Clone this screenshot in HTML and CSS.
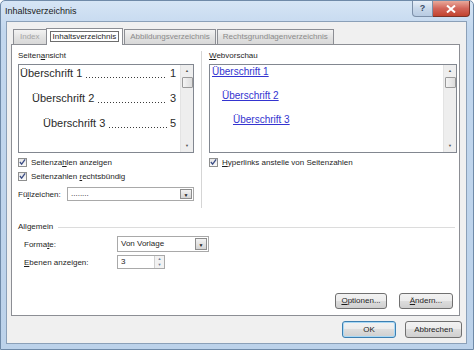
FILE: index.html
```html
<!DOCTYPE html>
<html lang="de">
<head>
    <meta charset="UTF-8">
    <title>Inhaltsverzeichnis</title>
    <link rel="stylesheet" href="styles.css">
</head>
<body>

    <div class="fenster">
        <!-- Titelleiste -->
        <div class="titelleiste">
            <span class="titel">Inhaltsverzeichnis</span>
            <div class="titel-knoepfe">
                <div class="knopf-hilfe">?</div>
                <div class="knopf-schliessen">
                    <svg width="10" height="8" viewBox="0 0 10 8"><path d="M1 0.5 L9 7.5 M9 0.5 L1 7.5" stroke="#fff" stroke-width="2"/></svg>
                </div>
            </div>
        </div>

        <div class="client">
            <!-- Reiter -->
            <div class="reiter-leiste">
                <div class="reiter blass">Index</div>
                <div class="reiter aktiv"><span class="fokus">Inhaltsverzeichnis</span></div>
                <div class="reiter">Abbildungsverzeichnis</div>
                <div class="reiter">Rechtsgrundlagenverzeichnis</div>
            </div>

            <div class="panel">
                <div class="oben">
                    <div class="spalte links">
                        <div class="label">Seiten<u>a</u>nsicht</div>
                        <div class="liste">
                            <div class="liste-inhalt druck">
                                <div class="eintrag e1"><span>Überschrift 1</span><span class="punkte"></span><span>1</span></div>
                                <div class="eintrag e2"><span>Überschrift 2</span><span class="punkte"></span><span>3</span></div>
                                <div class="eintrag e3"><span>Überschrift 3</span><span class="punkte"></span><span>5</span></div>
                            </div>
                            <div class="scrollbar">
                                <span class="pfeil">&#9650;</span>
                                <span class="daumen"></span>
                                <span class="leer"></span>
                                <span class="pfeil">&#9660;</span>
                            </div>
                        </div>
                        <div class="check erste"><span class="kasten"><svg width="8" height="8" viewBox="0 0 8 8"><path d="M1 4 L3 6.5 L7 1" fill="none" stroke="#3c4e86" stroke-width="1.5"/></svg></span><span>Seitenza<u>h</u>len anzeigen</span></div>
                        <div class="check"><span class="kasten"><svg width="8" height="8" viewBox="0 0 8 8"><path d="M1 4 L3 6.5 L7 1" fill="none" stroke="#3c4e86" stroke-width="1.5"/></svg></span><span>Seitenzahlen <u>r</u>echtsbündig</span></div>
                        <div class="zeile-fuell">
                            <span class="fuell-label">Fü<u>l</u>lzeichen:</span>
                            <div class="auswahl breit">
                                <span class="wert">........</span>
                                <span class="dropknopf">&#9660;</span>
                            </div>
                        </div>
                    </div>

                    <div class="trenner"></div>

                    <div class="spalte rechts">
                        <div class="label"><u>W</u>ebvorschau</div>
                        <div class="liste">
                            <div class="liste-inhalt web">
                                <a class="link l1">Überschrift 1</a>
                                <a class="link l2">Überschrift 2</a>
                                <a class="link l3">Überschrift 3</a>
                            </div>
                            <div class="scrollbar">
                                <span class="pfeil">&#9650;</span>
                                <span class="daumen"></span>
                                <span class="leer"></span>
                                <span class="pfeil">&#9660;</span>
                            </div>
                        </div>
                        <div class="check erste"><span class="kasten"><svg width="8" height="8" viewBox="0 0 8 8"><path d="M1 4 L3 6.5 L7 1" fill="none" stroke="#3c4e86" stroke-width="1.5"/></svg></span><span><u>H</u>yperlinks anstelle von Seitenzahlen</span></div>
                    </div>
                </div>

                <!-- Gruppe Allgemein -->
                <div class="gruppe">
                    <div class="gruppe-titel"><span>Allgemein</span><span class="linie"></span></div>
                    <div class="zeile">
                        <span class="zeile-label">Forma<u>t</u>e:</span>
                        <div class="auswahl formate">
                            <span class="wert">Von Vorlage</span>
                            <span class="dropknopf">&#9660;</span>
                        </div>
                    </div>
                    <div class="zeile">
                        <span class="zeile-label"><u>E</u>benen anzeigen:</span>
                        <div class="spin">
                            <span class="wert">3</span>
                            <span class="spin-knoepfe"><span>&#9650;</span><span>&#9660;</span></span>
                        </div>
                    </div>
                </div>

                <div class="panel-knoepfe">
                    <div class="knopf opt"><u>O</u>ptionen...</div>
                    <div class="knopf aend"><u>Ä</u>ndern...</div>
                </div>
            </div>

            <div class="fuss">
                <div class="knopf ok">OK</div>
                <div class="knopf abbr">Abbrechen</div>
            </div>
        </div>
    </div>

</body>
</html>
```

FILE: styles.css
```css
/* --- Grundeinstellungen --- */
* {
    margin: 0;
    padding: 0;
    box-sizing: border-box;
}

body {
    width: 474px;
    height: 350px;
    overflow: hidden;
    font-family: 'Liberation Sans', Arial, sans-serif;
    font-size: 8px;
    color: #1e1e1e;
    background: #ffffff;
}

u {
    text-decoration: underline;
}

/* --- Fensterrahmen --- */
.fenster {
    width: 474px;
    height: 350px;
    background: linear-gradient(to bottom, #d6e5f5 0px, #c2d7ee 30px, #bcd2ea 100%);
    border: 1px solid #6f8aa8;
    border-radius: 5px 5px 0 0;
    display: flex;
    flex-direction: column;
}

.titelleiste {
    height: 20px;
    display: flex;
    justify-content: space-between;
    align-items: flex-start;
    padding-left: 4px;
}

.titel {
    font-size: 9px;
    line-height: 20px;
    color: #1b1b1b;
}

.titel-knoepfe {
    display: flex;
    margin-right: 3px;
}

.knopf-hilfe {
    width: 21px;
    height: 16px;
    border: 1px solid #7c8fa8;
    border-top: none;
    border-radius: 0 0 0 4px;
    background: linear-gradient(to bottom, #e8eff8, #c9d8ea 50%, #b8cbe2);
    color: #3b4d66;
    font-size: 9px;
    font-weight: bold;
    text-align: center;
    line-height: 15px;
}

.knopf-schliessen {
    width: 37px;
    height: 16px;
    border: 1px solid #7a3328;
    border-left: none;
    border-top: none;
    border-radius: 0 0 4px 0;
    background: linear-gradient(to bottom, #e9a99a, #d2655a 50%, #c2432f);
    display: flex;
    justify-content: center;
    align-items: center;
}

/* --- Clientbereich --- */
.client {
    flex: 1;
    margin: 0 6px 6px 5px;
    background: #f0f0f0;
    border: 1px solid #8ba0b8;
    padding: 6px 4px 5px 4px;
    display: flex;
    flex-direction: column;
}

.reiter-leiste {
    display: flex;
    align-items: flex-end;
    padding-left: 2px;
    height: 16px;
    position: relative;
    z-index: 1;
}

.reiter {
    height: 15px;
    padding: 0 5px;
    margin-right: 1px;
    border: 1px solid #8c8e94;
    border-bottom: none;
    background: linear-gradient(to bottom, #f3f3f3, #e3e3e3 50%, #d8d8d8);
    color: #8b8b8b;
    line-height: 14px;
    white-space: nowrap;
}

.reiter.blass {
    color: #a5a5a5;
    padding: 0 6px;
}

.reiter.aktiv {
    height: 17px;
    margin: 0 1px 0 -2px;
    padding: 0 3px;
    background: #ffffff;
    color: #1e1e1e;
    margin-bottom: -1px;
    line-height: 15px;
}

.fokus {
    border: 1px solid #6d6d6d;
    padding: 0 2px;
}

/* --- Reiterinhalt --- */
.panel {
    height: 272px;
    margin-right: 2px;
    background: #ffffff;
    border: 1px solid #8c8e94;
    padding: 5px 2px 6px 6px;
    display: flex;
    flex-direction: column;
}

.oben {
    display: flex;
    height: 158px;
    flex-shrink: 0;
}

.spalte.links {
    width: 176px;
}

.spalte.rechts {
    width: 250px;
}

.trenner {
    width: 1px;
    background: #d5d5d5;
    margin: 1px 7px 0 7px;
}

.label {
    line-height: 12px;
    height: 12px;
    margin-bottom: 2px;
}

.liste {
    height: 89px;
    border: 1px solid #828790;
    display: flex;
}

.liste-inhalt {
    flex: 1;
    overflow: hidden;
}

.druck {
    padding: 2px 4px 0 1px;
    font-size: 11px;
    color: #2a2a2a;
}

.eintrag {
    display: flex;
    white-space: nowrap;
    line-height: 13px;
    height: 25px;
}

/* Füllpunkte als Hintergrundmuster */
.eintrag .punkte {
    flex: 1;
    height: 13px;
    margin: 0 3px 0 3px;
    background-image: linear-gradient(to right, #3a3a3a 1px, transparent 1px);
    background-size: 3px 1px;
    background-repeat: repeat-x;
    background-position: 1px 10px;
}

.e2 {
    padding-left: 12px;
}

.e3 {
    padding-left: 23px;
}

.web {
    padding: 1px 2px;
    font-size: 10px;
}

.link {
    display: block;
    color: #3434d0;
    text-decoration: underline;
    line-height: 12px;
    height: 24px;
}

.l2 {
    padding-left: 10px;
}

.l3 {
    padding-left: 21px;
}

/* --- Scrollleiste --- */
.scrollbar {
    width: 13px;
    background: #eeeeee;
    border-left: 1px solid #e3e3e3;
    display: flex;
    flex-direction: column;
    align-items: center;
}

.scrollbar .pfeil {
    height: 12px;
    font-size: 4px;
    line-height: 12px;
    color: #555555;
}

.scrollbar .daumen {
    width: 11px;
    height: 11px;
    border: 1px solid #9a9a9a;
    border-radius: 1px;
    background: linear-gradient(to right, #f4f4f4, #dcdcdc);
}

.scrollbar .leer {
    flex: 1;
}

/* --- Kontrollkästchen --- */
.check {
    display: flex;
    align-items: center;
    height: 12px;
    margin-top: 2px;
    white-space: nowrap;
}

.check.erste {
    margin-top: 3px;
}

.kasten {
    width: 9px;
    height: 9px;
    border: 1px solid #8e8f8f;
    background: linear-gradient(to bottom, #e6e6e6, #fafafa);
    margin-right: 4px;
    display: flex;
    align-items: center;
    justify-content: center;
}

/* --- Auswahllisten --- */
.zeile-fuell {
    display: flex;
    align-items: center;
    margin-top: 5px;
}

.fuell-label {
    width: 49px;
}

.auswahl {
    height: 14px;
    border: 1px solid #a9a9a9;
    display: flex;
    align-items: stretch;
    background: #ffffff;
}

.auswahl.breit {
    width: 127px;
}

.auswahl.formate {
    width: 92px;
    height: 16px;
}

.wert {
    flex: 1;
    padding-left: 3px;
    line-height: 12px;
    white-space: nowrap;
    overflow: hidden;
}

.auswahl.formate .wert {
    line-height: 14px;
}

.dropknopf {
    width: 12px;
    margin: 1px;
    border: 1px solid #8d8d8d;
    background: linear-gradient(to bottom, #f2f2f2, #d4d4d4);
    font-size: 5px;
    text-align: center;
    line-height: 10px;
    color: #222222;
}

.auswahl.formate .dropknopf {
    line-height: 12px;
}

/* --- Gruppe Allgemein --- */
.gruppe {
    margin-top: 13px;
    height: 62px;
    flex-shrink: 0;
}

.gruppe-titel {
    display: flex;
    align-items: center;
    line-height: 12px;
    height: 12px;
}

.gruppe-titel .linie {
    flex: 1;
    height: 1px;
    background: #dcdcdc;
    margin-left: 5px;
    margin-right: 2px;
}

.zeile {
    display: flex;
    align-items: center;
    padding-left: 6px;
    margin-top: 3px;
}

.zeile + .zeile {
    margin-top: 3px;
}

.zeile-label {
    width: 93px;
}

.spin {
    width: 48px;
    height: 14px;
    border: 1px solid #a9a9a9;
    display: flex;
}

.spin-knoepfe {
    width: 10px;
    display: flex;
    flex-direction: column;
    border-left: 1px solid #d0d0d0;
    background: #f2f2f2;
}

.spin-knoepfe span {
    flex: 1;
    font-size: 4px;
    line-height: 6px;
    text-align: center;
    color: #6f7f99;
}

/* --- Schaltflächen --- */
.knopf {
    height: 16px;
    border: 1px solid #707070;
    border-radius: 3px;
    background: linear-gradient(to bottom, #f2f2f2 0%, #ebebeb 49%, #dddddd 50%, #cfcfcf 100%);
    text-align: center;
    line-height: 14px;
    color: #1e1e1e;
}

.panel-knoepfe {
    margin-top: auto;
    display: flex;
    justify-content: flex-end;
    gap: 12px;
    padding-right: 4px;
}

.opt {
    width: 52px;
}

.aend {
    width: 54px;
}

.fuss {
    display: flex;
    justify-content: flex-end;
    gap: 9px;
    margin-top: 5px;
}

.ok {
    width: 54px;
    height: 17px;
    border-color: #3c7fb1;
    box-shadow: inset 0 0 0 1px #a8d8f5;
    line-height: 15px;
}

.abbr {
    width: 57px;
    height: 17px;
    line-height: 15px;
}
```
